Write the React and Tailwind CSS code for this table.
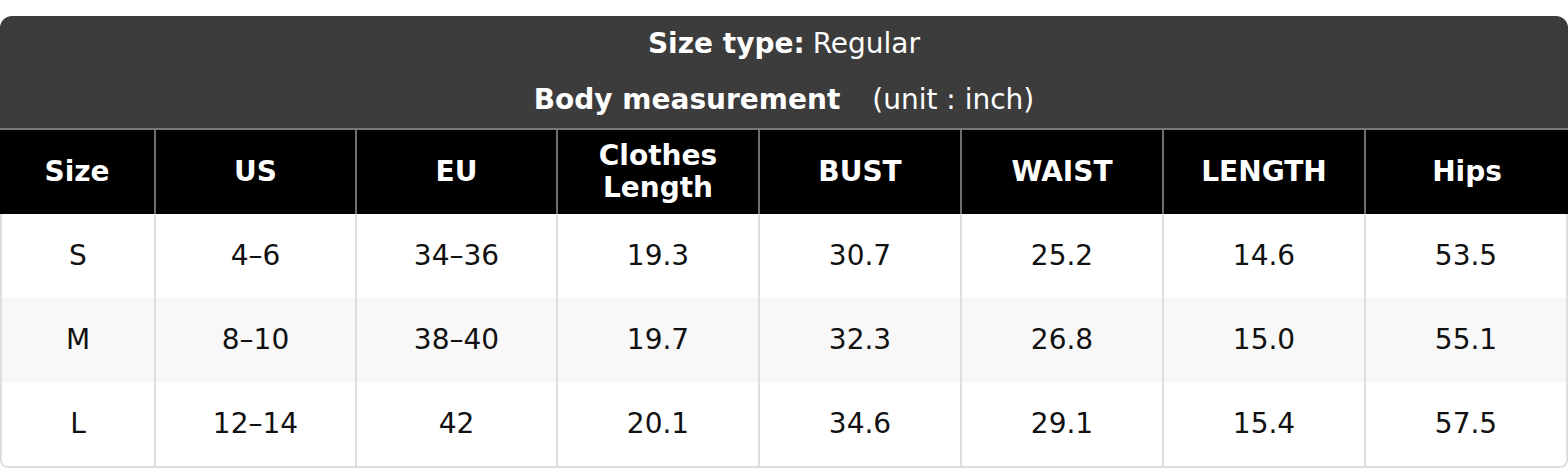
const columns = ["Size", "US", "EU", "Clothes\nLength", "BUST", "WAIST", "LENGTH", "Hips"];

const rows = [
    ["S", "4–6", "34–36", "19.3", "30.7", "25.2", "14.6", "53.5"],
    ["M", "8–10", "38–40", "19.7", "32.3", "26.8", "15.0", "55.1"],
    ["L", "12–14", "42", "20.1", "34.6", "29.1", "15.4", "57.5"],
];

function App() {
    return (
        <div className="w-[1568px] h-[468px] bg-white pt-4 font-['DejaVu_Sans',sans-serif]">
            <div className="w-full">
                {/* titulo */}
                <div className="bg-[#3c3c3c] rounded-t-xl text-white text-[28px]">
                    <div className="h-14 flex items-center justify-center">
                        <span className="font-bold">Size type:</span>
                        <span className="ml-2">Regular</span>
                    </div>
                    <div className="h-14 flex items-center justify-center">
                        <span className="font-bold">Body measurement</span>
                        <span className="ml-8">(unit : inch)</span>
                    </div>
                </div>

                {/* cabecera */}
                <div className="grid grid-cols-[154px_201px_201px_202px_202px_202px_202px_1fr] bg-black border-t-2 border-[#787878] h-[86px]">
                    {columns.map((col, i) => (
                        <div
                            key={col}
                            className={`flex items-center justify-center text-center text-white font-bold text-[28px] leading-[32px] whitespace-pre-line ${
                                i > 0 ? "border-l-2 border-[#6e6e6e]" : ""
                            }`}
                        >
                            {col}
                        </div>
                    ))}
                </div>

                {/* filas */}
                <div className="border-x-2 border-b-2 border-[#dedede] rounded-b-lg overflow-hidden">
                    {rows.map((row, r) => (
                        <div
                            key={r}
                            className={`grid grid-cols-[152px_201px_201px_202px_202px_202px_202px_1fr] h-[84px] ${
                                r === 1 ? "bg-[#f8f8f8]" : "bg-white"
                            }`}
                        >
                            {row.map((cell, i) => (
                                <div
                                    key={i}
                                    className={`flex items-center justify-center text-[28px] text-[#111] ${
                                        i > 0 ? "border-l-2 border-[#dedede]" : ""
                                    }`}
                                >
                                    {cell}
                                </div>
                            ))}
                        </div>
                    ))}
                </div>
            </div>
        </div>
    );
}

export default App;
